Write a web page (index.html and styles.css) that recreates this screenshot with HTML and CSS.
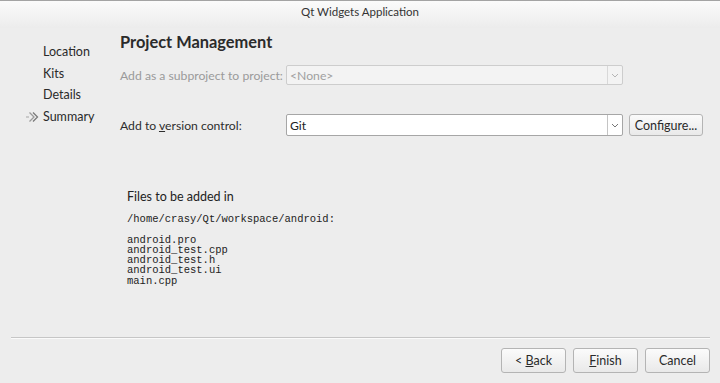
FILE: index.html
```html
<!DOCTYPE html>
<html lang="en">
<head>
  <meta charset="UTF-8">
  <title>Qt Widgets Application</title>
  <link rel="stylesheet" href="styles.css">
</head>
<body>

  <!-- Title bar -->
  <div class="titlebar">Qt Widgets Application</div>

  <div class="main">
    <!-- Wizard steps -->
    <ul class="steps">
      <li>Location</li>
      <li>Kits</li>
      <li>Details</li>
      <li class="current">
        <svg class="step-arrow" width="14" height="12" viewBox="0 0 14 12">
          <path d="M1 6h3" stroke="#b0b0b0" stroke-width="1.2" fill="none"/>
          <path d="M4.5 1.5l4.5 4.5-4.5 4.5" stroke="#9a9a9a" stroke-width="1.3" fill="none"/>
          <path d="M8 1.5l4.5 4.5-4.5 4.5" stroke="#7a7a7a" stroke-width="1.3" fill="none"/>
        </svg>
        Summary
      </li>
    </ul>

    <!-- Page -->
    <div class="page">
      <h2>Project Management</h2>

      <div class="form">
        <label class="disabled">Add as a subproject to project:</label>
        <div class="combo combo-disabled">
          <span>&lt;None&gt;</span>
          <span class="combo-arrow">
            <svg width="8" height="5" viewBox="0 0 8 5"><path d="M1 1l3 3 3-3" stroke="#b5b5b5" fill="none"/></svg>
          </span>
        </div>
        <div></div>

        <label class="row2">Add to <u>v</u>ersion control:</label>
        <div class="combo row2">
          <span>Git</span>
          <span class="combo-arrow">
            <svg width="8" height="5" viewBox="0 0 8 5"><path d="M1 1l3 3 3-3" stroke="#777" fill="none"/></svg>
          </span>
        </div>
        <button class="btn row2">Configure...</button>
      </div>

      <div class="files">
        <p>Files to be added in</p>
<pre>/home/crasy/Qt/workspace/android:

android.pro
android_test.cpp
android_test.h
android_test.ui
main.cpp</pre>
      </div>
    </div>
  </div>

  <!-- Bottom buttons -->
  <div class="footer">
    <div class="separator"></div>
    <div class="buttons">
      <button class="btn">&lt; <u>B</u>ack</button>
      <button class="btn"><u>F</u>inish</button>
      <button class="btn">Cancel</button>
    </div>
  </div>

</body>
</html>
```

FILE: styles.css
```css
* {
  margin: 0;
  padding: 0;
  box-sizing: border-box;
}

body {
  width: 720px;
  height: 383px;
  overflow: hidden;
  font-family: Lato, 'Open Sans', sans-serif;
  font-size: 12.2px;
  color: #2e2e2e;
  background-color: #ededed;
  display: flex;
  flex-direction: column;
}

/* Title bar */
.titlebar {
  height: 28px;
  border-top: 1px solid #a4a4a4;
  background: linear-gradient(#fbfbfb, #ececec);
  text-align: center;
  font-size: 11.5px;
  line-height: 21px;
  color: #333;
}

.main {
  display: flex;
  flex: 1;
}

/* Steps */
.steps {
  list-style: none;
  width: 120px;
  padding-top: 13px;
}

.steps li {
  position: relative;
  height: 21.5px;
  line-height: 21.5px;
  padding-left: 43px;
  font-size: 12.5px;
  color: #2a2a2a;
}

.step-arrow {
  position: absolute;
  left: 25px;
  top: 5px;
}

/* Page */
.page {
  width: 583px;
}

.page h2 {
  margin-top: 3px;
  font-size: 16.4px;
  font-weight: 700;
  line-height: 22px;
  color: #2b2b2b;
}

.form {
  display: grid;
  grid-template-columns: 166px 337px 80px;
  margin-top: 12px;
  align-items: center;
}

.form label {
  white-space: nowrap;
  color: #2e2e2e;
}

.form label.disabled {
  color: #9a9a9a;
}

.form .row2 {
  margin-top: 29px;
}

.form .btn {
  width: 74px;
  margin-left: 6px;
}

.combo {
  display: flex;
  align-items: center;
  justify-content: space-between;
  height: 22px;
  padding-left: 3px;
  background-color: #fff;
  border: 1px solid #a6a6a6;
  border-radius: 2px;
  color: #222;
}

.combo-disabled {
  height: 20px;
  background-color: #f3f3f3;
  border-color: #cdcdcd;
  color: #a0a0a0;
}

.combo-arrow {
  display: flex;
  align-items: center;
  justify-content: center;
  width: 15px;
  height: 100%;
  border-left: 1px solid #c4c4c4;
}

.combo-disabled .combo-arrow {
  border-left-color: #d8d8d8;
}

/* Buttons */
.btn {
  height: 22px;
  font-family: Lato, 'Open Sans', sans-serif;
  font-size: 12.5px;
  color: #2a2a2a;
  background: linear-gradient(#fbfbfb, #e9e9e9);
  border: 1px solid #b4b4b4;
  border-radius: 3px;
}

/* Files list */
.files {
  margin-top: 53px;
  padding-left: 7px;
}

.files p {
  line-height: 16px;
  font-size: 12.5px;
  color: #222;
}

.files pre {
  margin-top: 9px;
  font-family: 'Liberation Mono', monospace;
  font-size: 10.5px;
  line-height: 10.3px;
  color: #222;
}

/* Footer */
.footer {
  height: 46px;
}

.separator {
  margin: 0 10px 0 11px;
  height: 2px;
  border-top: 1px solid #c6c6c6;
  border-bottom: 1px solid #fafafa;
}

.buttons {
  display: flex;
  justify-content: flex-end;
  gap: 7px;
  margin-top: 9px;
  padding-right: 10px;
}

.buttons .btn {
  width: 65px;
  height: 25px;
}
```
